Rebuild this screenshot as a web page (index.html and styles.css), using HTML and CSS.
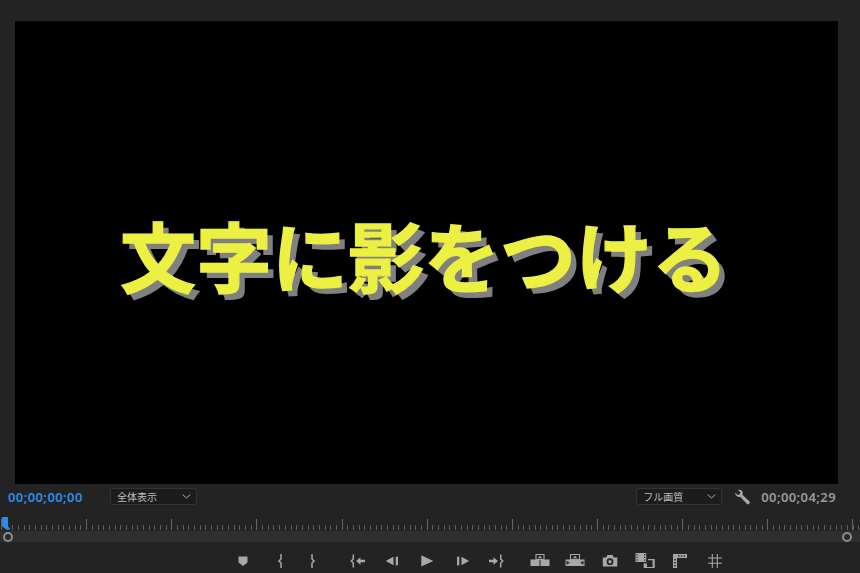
FILE: index.html
```html
<!DOCTYPE html>
<html lang="ja">
<head>
<meta charset="utf-8">
<title>Program Monitor</title>
<link rel="stylesheet" href="styles.css">
</head>
<body>
<main class="monitor">
  <section class="video">
    <h1 class="title">文字に影をつける</h1>
  </section>
  <div class="controls">
    <span class="tc tc-current">00;00;00;00</span>
    <div class="select select-zoom"><span>全体表示</span><svg class="chev" viewBox="0 0 9 5"><path d="M.7.7 4.500 4 8.300.7"/></svg></div>
    <div class="select select-quality"><span>フル画質</span><svg class="chev" viewBox="0 0 9 5"><path d="M.7.7 4.500 4 8.300.7"/></svg></div>
    <svg class="wrench" viewBox="0 0 16 16"><path d="M1 3.600 3.600 6 5.800 5.200 6.400 3.200 4 .9C6 .2 8.300 1 8.700 3.200 8.900 4.200 8.700 5 8.400 5.700L15.300 12.300C16 13 15.900 14 15.200 14.700 14.500 15.400 13.500 15.400 12.800 14.700L6.300 7.900C4.200 8.500 1 7 1 3.600Z"/></svg>
    <span class="tc tc-total">00;00;04;29</span>
  </div>
  <div class="ruler">
    <svg class="playhead" viewBox="0 0 9 14"><path d="M1 0H7V9.500L9 11.500V12.500H5L1 9Z"/></svg>
  </div>
  <div class="track">
    <span class="knob knob-in"></span>
    <span class="knob knob-out"></span>
  </div>
  <div class="transport">
    <svg viewBox="0 0 20 20"><path d="M5.500 5.500H14.500V11.500L10 15 5.500 11.500Z"/></svg>
    <svg viewBox="0 0 20 20"><path class="ln" d="M11 3V8L9 10 11 12V17"/></svg>
    <svg viewBox="0 0 20 20"><path class="ln" d="M10 3V8L12 10 10 12V17"/></svg>
    <svg viewBox="0 0 20 20"><path class="ln" d="M5.300 3.500V8L3.300 10 5.300 12V16.500"/><path d="M8 10 12.500 6.200V8.700H17V11.300H12.500V13.800Z"/></svg>
    <svg viewBox="0 0 20 20"><path d="M3.700 10 11.500 5.700V14.300Z"/><path d="M13.700 5.700H16V14.300H13.700Z"/></svg>
    <svg viewBox="0 0 20 20"><path d="M4.300 4.200 16.300 10 4.300 15.500Z"/></svg>
    <svg viewBox="0 0 20 20"><path d="M4 5.700H6.300V14.300H4Z"/><path d="M16 10 8.500 5.700V14.300Z"/></svg>
    <svg viewBox="0 0 20 20"><path class="ln" d="M14.700 3.500V8L16.700 10 14.700 12V16.500"/><path d="M12 10 7.500 6.200V8.700H3V11.300H7.500V13.800Z"/></svg>
    <svg viewBox="0 0 20 20"><path d="M.5 8.500H9.500V15H.5ZM10.500 8.500H19.500V15H10.500Z"/><path class="ln thin" d="M6 3.500H14V8.500H6Z"/><path d="M10 4.800 12.300 7.300H7.700Z"/></svg>
    <svg viewBox="0 0 20 20"><path fill-rule="evenodd" d="M.5 8.500H19.500V15H.5ZM1.500 9.800V13.700L4.800 11.700ZM18.500 9.800V13.700L15.200 11.700Z"/><path class="ln thin" d="M5.500 3.500H14.500V8.500H5.500Z"/><path d="M10 4.800 12.300 7.300H7.700Z"/></svg>
    <svg viewBox="0 0 20 20"><path fill-rule="evenodd" d="M2.800 6.500H6.300L7.400 4H12.600L13.700 6.500H17.300V15.500H2.800ZM10 7.300A3.400 3.400 0 1 0 10 14.100 3.400 3.400 0 1 0 10 7.300ZM10 9A1.700 1.700 0 1 1 10 12.400 1.700 1.700 0 1 1 10 9Z"/></svg>
    <svg viewBox="0 0 20 20"><path fill-rule="evenodd" d="M.5 2H11.200V11H.5ZM1.500 3V4.300H2.700V3ZM1.500 5.700V7H2.700V5.700ZM1.500 8.400V9.700H2.700V8.400ZM9 3V4.300H10.200V3ZM9 5.700V7H10.200V5.700ZM9 8.400V9.700H10.200V8.400Z"/><path class="ln thin" d="M13 8.600H19V16.500H9.300V12"/><path d="M9 12.500H12V17H9ZM17.600 8.200H19.500V17H17.600Z"/></svg>
    <svg viewBox="0 0 20 20"><path fill-rule="evenodd" d="M3 3H17V7H7V17H3ZM8 4.200V5.800H9.500V4.200ZM10.800 4.200V5.800H12.300V4.200ZM13.600 4.200V5.800H15.100V4.200ZM4.200 8V9.600H5.800V8ZM4.200 11V12.600H5.800V11ZM4.200 14V15.600H5.800V14Z"/></svg>
    <svg viewBox="0 0 20 20"><path class="ln thin" d="M7.300 3V17M12.300 3V17M3 7H17M3 12.300H17"/></svg>
    <svg viewBox="0 0 20 20" class="plus"><path d="M8.700 6H11.300V9.200H15.500V11.800H11.300V17H8.700V11.800H4.500V9.200H8.700Z"/></svg>
  </div>
</main>
</body>
</html>
```
FILE: styles.css
```css
* { box-sizing: border-box; }
html, body {
  margin: 0;
  height: 100%;
  background: #232323;
  overflow: hidden;
}
.monitor {
  position: relative;
  width: 860px;
  height: 573px;
  display: flex;
  flex-direction: column;
  padding-top: 21px;
  font-family: "Noto Sans", "Noto Sans CJK JP", sans-serif;
}
.video {
  width: 823px;
  height: 463px;
  margin-left: 15px;
  background: #000;
  display: flex;
  align-items: center;
  justify-content: center;
  flex: none;
}
.title {
  margin: 2px 5px 0 0;
  font-family: "Noto Sans CJK JP", sans-serif;
  font-size: 76px;
  font-weight: 700;
  line-height: 1;
  white-space: nowrap;
  color: #ecf042;
  -webkit-text-stroke: 1.300px #ecf042;
  text-shadow: 6px 6px 0 #808080;
}
.controls {
  height: 30px;
  flex: none;
  display: flex;
  align-items: center;
  padding: 0 24px 5px 8px;
}
.tc {
  font-size: 13px;
  font-weight: 600;
  letter-spacing: .4px;
  white-space: nowrap;
}
.tc-current { color: #2d8ceb; width: 102px; }
.tc-total { color: #9a9a9a; margin-left: 11px; }
.select {
  height: 17px;
  background: #1c1c1c;
  border: 1px solid #333;
  border-radius: 3px;
  display: flex;
  align-items: center;
  justify-content: space-between;
  padding: 0 5px 0 6px;
  font-family: "Noto Sans CJK JP", sans-serif;
  font-size: 10px;
  color: #bdbdbd;
}
.select-zoom { width: 87px; }
.select-quality { width: 86px; margin-left: auto; }
.chev { width: 9px; height: 5px; fill: none; stroke: #a8a8a8; stroke-width: 1; }
.wrench { width: 16px; height: 16px; margin-left: 12px; fill: #a8a8a8; }
.ruler {
  position: relative;
  height: 17px;
  flex: none;
  background-image:
    repeating-linear-gradient(90deg, #666 0 1px, transparent 1px 85.150px),
    repeating-linear-gradient(90deg, #5c5c5c 0 1px, transparent 1px 5.677px);
  background-size: 100% 11px, 100% 5px;
  background-position: 1px 5px, 1px 11px;
  background-repeat: repeat-x;
}
.playhead {
  position: absolute;
  left: 1px;
  top: 3px;
  width: 9px;
  height: 14px;
  fill: #2d8ceb;
}
.track {
  height: 11px;
  flex: none;
  background: #2f2f2f;
}
.knob {
  position: absolute;
  top: 532px;
  width: 10px;
  height: 10px;
  border-radius: 50%;
  border: 2px solid #8c8c8c;
  background: #2a2a2a;
}
.knob-in { left: 3px; }
.knob-out { left: 842px; }
.transport {
  flex: 1;
  display: grid;
  grid-template-columns: 37px 32px 46px 34px 35px 36px 33px 43.500px 35px 35.500px 34.500px 35.500px 35px 119px;
  padding: 9px 0 0 233px;
  align-items: start;
}
.transport svg {
  width: 20px;
  height: 20px;
  overflow: visible;
  fill: #a8a8a8;
}
.transport .ln {
  fill: none;
  stroke: #a8a8a8;
  stroke-width: 1.500;
}
.transport .thin { stroke-width: 1.100; }
.transport .plus { fill: #c4c4c4; }
```
